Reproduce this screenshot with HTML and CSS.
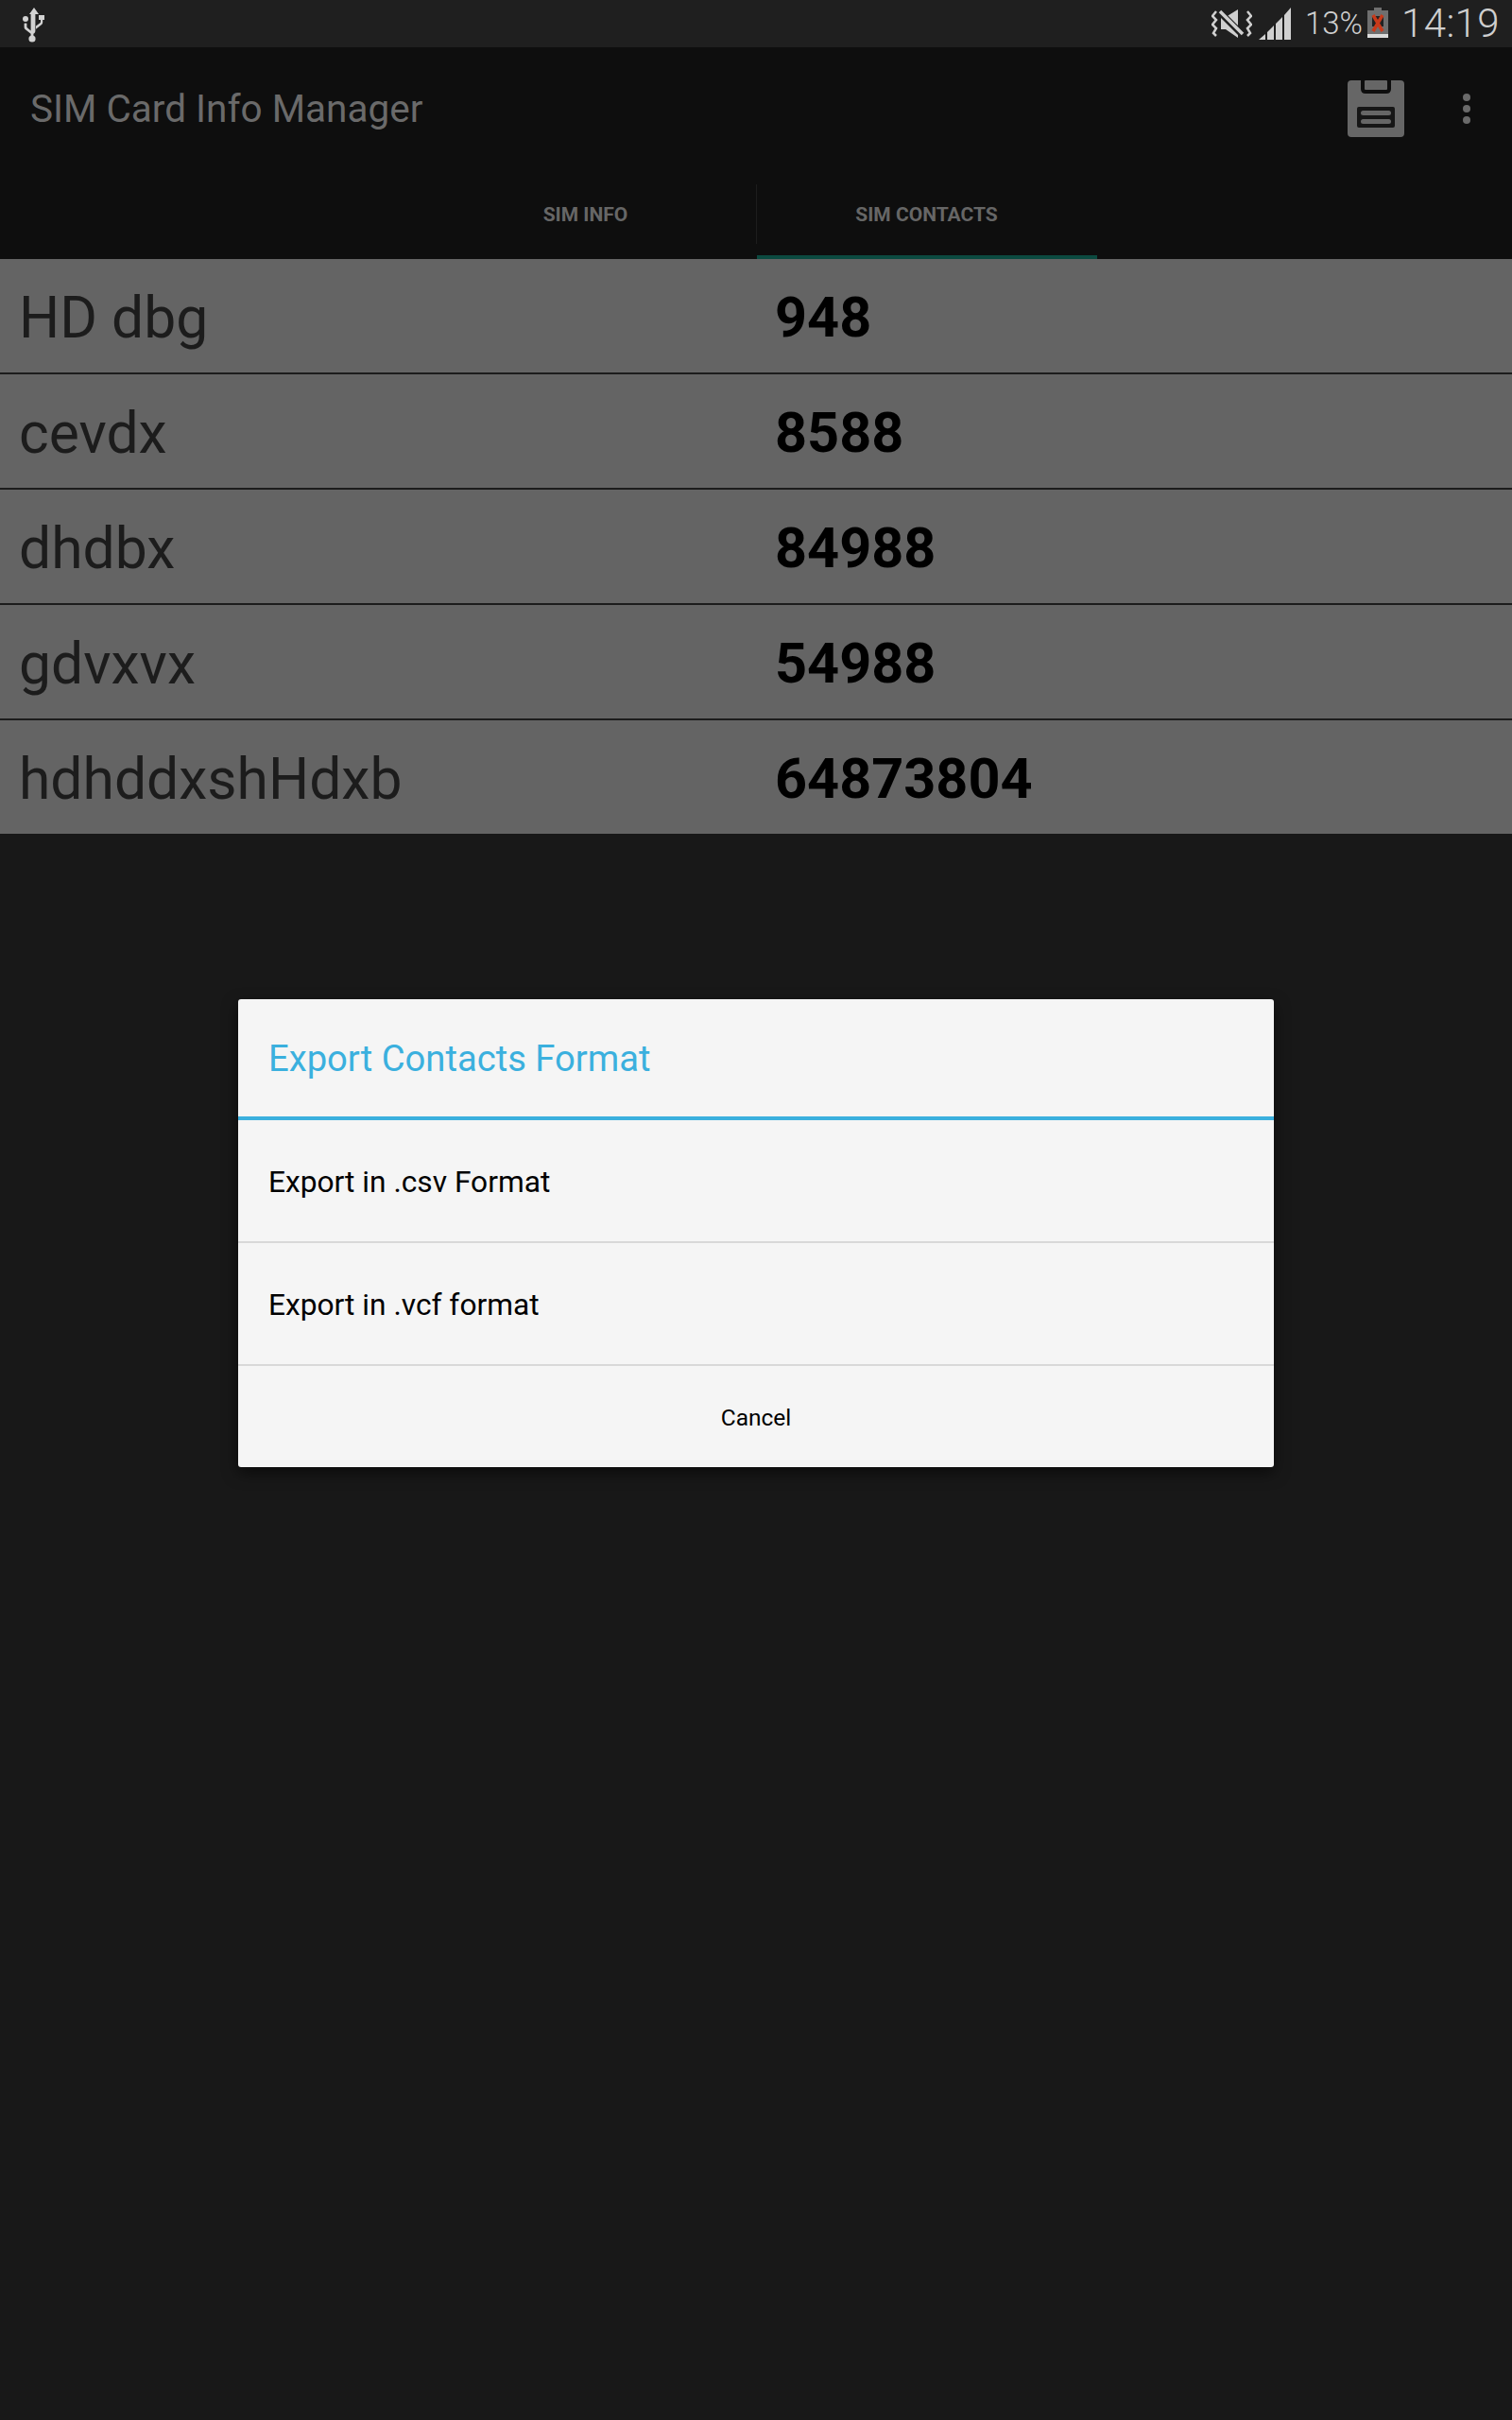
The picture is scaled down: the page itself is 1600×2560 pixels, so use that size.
FILE: index.html
```html
<!DOCTYPE html>
<html lang="en">
<head>
<meta charset="utf-8">
<title>SIM Card Info Manager</title>
<link rel="stylesheet" href="styles.css">
</head>
<body>
<div class="screen">
  <div class="status">
    <svg class="ic-usb" width="24" height="38" viewBox="0 0 24 38"><path d="M12 1l5 7h-3.6v17.500c0 1.600-.7 2.600-2 3.300v3.200h-2.800v-3.200l-5.700-4.500c-.9-.7-1.300-1.600-1.300-2.800v-3.700a3.400 3.400 0 0 1 2.800 0v3.400c0 .6.200 1 .7 1.400l3.500 2.900V8H7z" fill="#d2d2d2"/><circle cx="3" cy="13" r="3" fill="#d2d2d2"/><path d="M14 20.500l4.400-3.300c.4-.3.600-.7.600-1.200V14h-2v-5h6v5h-1.800v2.500c0 1.200-.5 2.100-1.400 2.800L14 23.800z" fill="#d2d2d2"/><circle cx="10" cy="34" r="3.600" fill="#d2d2d2"/></svg>
    <div class="status-right">
      <svg class="ic-mute" width="43" height="32" viewBox="0 0 43 32"><path d="M10 9h5l13-8v30L15 22h-5z" fill="#cfcfcf"/><path d="M8 3l25 25" stroke="#1f1f1f" stroke-width="7"/><path d="M9 3l24 24" stroke="#cfcfcf" stroke-width="3.500"/><path d="M5 3L1 8l4 4-4 5 4 4-3 5 3 3M38 3l4 5-4 4 4 5-4 4 3 5-3 3" fill="none" stroke="#cfcfcf" stroke-width="2.500"/></svg>
      <svg class="ic-signal" width="36" height="34" viewBox="0 0 36 34"><path d="M0 34l7-6v6zM9 26l7-7v15H9zM18 17l7-7v24h-7zM27 8l7-8v34h-7z" fill="#d0d0d0"/></svg>
      <span class="pct">13%</span>
      <svg class="ic-batt" width="22" height="32" viewBox="0 0 22 32"><path d="M7 0h8v3h7v29H0V3h7z" fill="#6f6f6f"/><rect y="28" width="22" height="4" fill="#dcdcdc"/><path d="M5 9h12v11H5z" fill="#222"/><path d="M6 8l10 17M16 8L6 25" stroke="#c93a1a" stroke-width="3.500"/></svg>
      <span class="clock">14:19</span>
    </div>
  </div>
  <header class="appbar">
    <h1 class="title">SIM Card Info Manager</h1>
    <div class="actions">
      <svg class="ic-save" width="60" height="60" viewBox="0 0 60 60"><path d="M4 0h10v9q0 5 5 5h22q5 0 5-5V0h10q4 0 4 4v52q0 4-4 4H4q-4 0-4-4V4q0-4 4-4z" fill="#666"/><rect x="18" y="0" width="24" height="10" fill="#666" rx="1"/><rect x="10" y="28" width="40" height="22" rx="2" fill="#161616"/><rect x="14" y="32" width="32" height="5" rx="2.500" fill="#666"/><rect x="14" y="41" width="32" height="5" rx="2.500" fill="#666"/></svg>
      <div class="overflow"><span class="dot"></span><span class="dot"></span><span class="dot"></span></div>
    </div>
  </header>
  <nav class="tabs">
    <div class="tab">SIM INFO</div>
    <div class="tab tab-active">SIM CONTACTS</div>
  </nav>
  <main class="list">
    <div class="row"><span class="name">HD dbg</span><span class="num">948</span></div>
    <div class="row"><span class="name">cevdx</span><span class="num">8588</span></div>
    <div class="row"><span class="name">dhdbx</span><span class="num">84988</span></div>
    <div class="row"><span class="name">gdvxvx</span><span class="num">54988</span></div>
    <div class="row"><span class="name">hdhddxshHdxb</span><span class="num">64873804</span></div>
  </main>
  <div class="dialog">
    <div class="dlg-title">Export Contacts Format</div>
    <div class="dlg-item">Export in .csv Format</div>
    <div class="dlg-item">Export in .vcf format</div>
    <div class="dlg-cancel">Cancel</div>
  </div>
</div>
</body>
</html>
```
FILE: styles.css
```css
* { box-sizing: border-box; }
html, body { margin: 0; padding: 0; }
body { background: #181818; font-family: Roboto, "Liberation Sans", sans-serif; }
.screen { position: relative; width: 1600px; height: 2560px; background: #181818; overflow: hidden; }

.status { height: 50px; background: #1f1f1f; display: flex; align-items: center; justify-content: space-between; padding: 0 13px 0 24px; }
.ic-usb { display: block; margin-top: 1px; }
.status-right { display: flex; align-items: center; color: #cfcfcf; }
.ic-mute { margin-right: 7px; margin-top: -1px; }
.ic-signal { margin-right: 13px; margin-top: -1px; }
.pct { font-size: 33px; font-weight: 300; margin-right: 5px; line-height: 50px; }
.ic-batt { margin-right: 14px; margin-top: -2px; }
.clock { font-size: 42px; font-weight: 300; letter-spacing: .4px; line-height: 50px; }

.appbar { height: 130px; background: #0e0e0e; display: flex; align-items: center; justify-content: space-between; padding: 0 44px 0 32px; }
.title { margin: 0; font-size: 40.500px; font-weight: 400; color: #6a6a6a; }
.actions { display: flex; align-items: center; gap: 62px; }
.ic-save { display: block; }
.overflow { display: flex; flex-direction: column; gap: 4px; }
.dot { width: 8px; height: 8px; border-radius: 50%; background: #6a6a6a; }

.tabs { height: 94px; background: #0e0e0e; display: flex; justify-content: center; padding-left: 2px; }
.tab { width: 360px; height: 94px; padding-right: 3px; display: flex; align-items: center; justify-content: center; font-size: 21px; font-weight: 700; color: #666; }
.tab-active { position: relative; border-bottom: 4px solid #0b4a40; padding-top: 4px; padding-right: 1px; }
.tab-active::before { content: ""; position: absolute; left: -1px; top: 15px; width: 1px; height: 63px; background: #1d1d1d; }

.list { background: #646464; }
.row { height: 122px; border-bottom: 2px solid #1c1c1c; padding-top: 4px; display: flex; align-items: center; }
.row:last-child { border-bottom: 0; height: 120px; }
.name { width: 820px; padding-left: 20px; font-size: 60.600px; color: #1c1c1c; }
.num { font-size: 59.400px; font-weight: 700; color: #000; }

.dialog { position: absolute; left: 252px; top: 1057px; width: 1096px; height: 495px; background: #f5f5f5; border-radius: 3px; box-shadow: 0 6px 16px rgba(0,0,0,.55); }
.dlg-title { height: 128px; border-bottom: 4px solid #3bb0de; padding: 2px 0 0 32px; display: flex; align-items: center; font-size: 38.200px; color: #3bb0de; }
.dlg-item { height: 130px; border-bottom: 2px solid #d8d8d8; padding: 2px 0 0 32px; display: flex; align-items: center; font-size: 31.700px; color: #000; }
.dlg-cancel { height: 107px; padding-top: 1px; display: flex; align-items: center; justify-content: center; font-size: 24.500px; color: #000; }
```
